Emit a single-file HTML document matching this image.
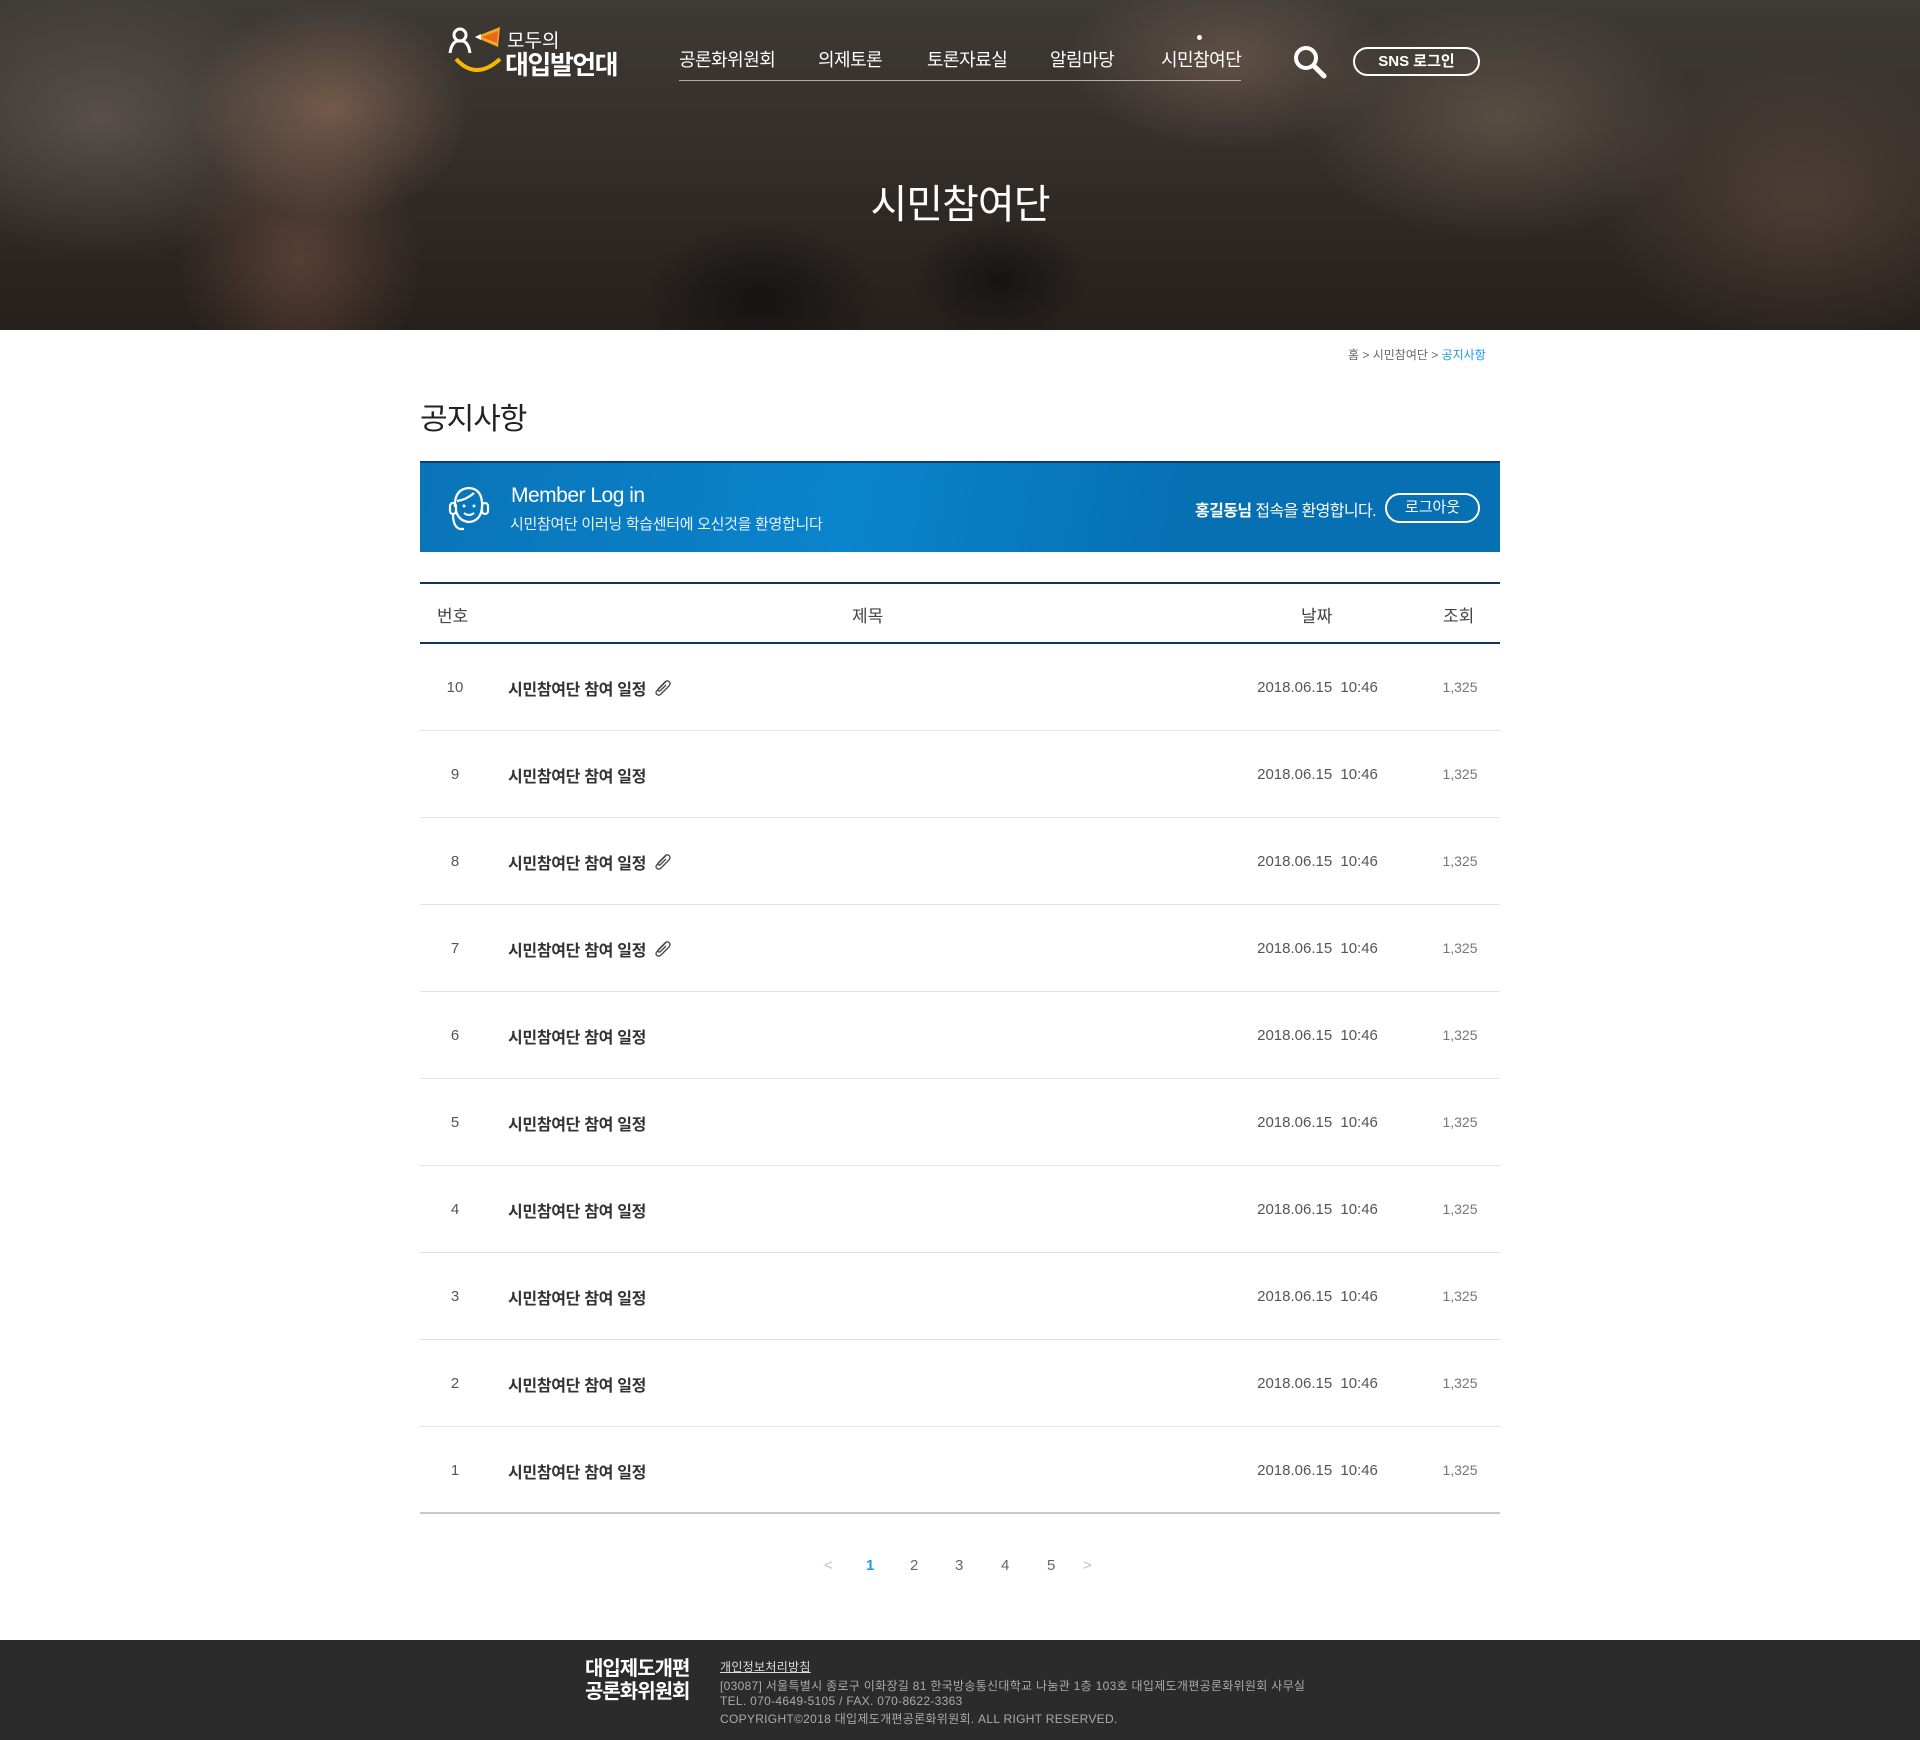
<!DOCTYPE html>
<html><head><meta charset="utf-8">
<style>
*{margin:0;padding:0;box-sizing:border-box}
body{width:1920px;height:1740px;position:relative;background:#fff;font-family:"Liberation Sans","Noto Sans CJK KR",sans-serif;color:#333;overflow:hidden}
.hero{position:absolute;left:0;top:0;width:1920px;height:330px;overflow:hidden;
background:
radial-gradient(ellipse 140px 110px at 330px 110px,rgba(190,140,110,.45),transparent),
radial-gradient(ellipse 120px 140px at 300px 260px,rgba(150,100,80,.4),transparent),
radial-gradient(ellipse 90px 60px at 1000px 280px,rgba(20,18,18,.9),transparent),
radial-gradient(ellipse 120px 80px at 760px 300px,rgba(20,18,18,.9),transparent),
radial-gradient(ellipse 200px 120px at 1500px 120px,rgba(140,120,100,.4),transparent),
radial-gradient(ellipse 220px 140px at 100px 120px,rgba(120,110,100,.5),transparent),
radial-gradient(ellipse 200px 150px at 1800px 200px,rgba(110,85,70,.45),transparent),
radial-gradient(ellipse 160px 90px at 1230px 60px,rgba(150,120,100,.4),transparent),
linear-gradient(180deg,#3e3a36 0%,#332d29 50%,#26201c 100%);}
.abs{position:absolute}
.nav a{position:absolute;top:46px;color:#fff;font-size:18px;text-decoration:none;white-space:nowrap;letter-spacing:-0.5px}
.row{position:absolute;left:420px;width:1080px;height:87px;border-bottom:1px solid #e4e4e4}
.row span{position:absolute;top:35px;font-size:15px;color:#555}
.row .n{width:70px;left:0;text-align:center}
.row .t{left:88px;top:32px;font-size:16px;font-weight:bold;color:#333;letter-spacing:-0.3px}
.row .d{left:830px;width:135px;text-align:center;word-spacing:4px}
.row .v{left:995px;width:90px;text-align:center;color:#777;font-size:14px}
.pg{position:absolute;top:1557px;font-size:15px;color:#666}
.ft{position:absolute;left:720px;font-size:12px;color:#aaa;white-space:nowrap;letter-spacing:0.3px}
</style></head><body>
<div class="hero">
  <svg class="abs" style="left:448px;top:26px" width="56" height="50" viewBox="0 0 56 50">
    <circle cx="12" cy="9" r="6" fill="none" stroke="#fff" stroke-width="3"/>
    <path d="M2 27 Q4 14 12 15 Q20 14 22 27" fill="none" stroke="#fff" stroke-width="3"/>
    <path d="M27 11 L52 1 L50 21 Z" fill="#f5a623"/>
    <path d="M34 11 L50 5 L49 17 Z" fill="#e8681a"/>
    <path d="M27 11 L33 8 L33 14 Z" fill="#fff"/>
    <path d="M8 33 Q28 55 52 33" fill="none" stroke="#f5b700" stroke-width="4"/>
  </svg>
  <div class="abs" style="left:507px;top:26px;color:#fff;font-size:19px">모두의</div>
  <div class="abs" style="left:505px;top:45px;color:#fff;font-size:26px;font-weight:bold;letter-spacing:-1.5px">대입발언대</div>
  <div class="nav">
    <a style="left:679px">공론화위원회</a>
    <a style="left:818px">의제토론</a>
    <a style="left:927px">토론자료실</a>
    <a style="left:1050px">알림마당</a>
    <a style="left:1161px">시민참여단</a>
  </div>
  <div class="abs" style="left:1197px;top:35px;width:5px;height:5px;border-radius:50%;background:#fff"></div>
  <div class="abs" style="left:679px;top:80px;width:562px;height:1px;background:rgba(255,255,255,.6)"></div>
  <svg class="abs" style="left:1293px;top:45px" width="36" height="34" viewBox="0 0 36 34">
    <circle cx="13" cy="13" r="10" fill="none" stroke="#fff" stroke-width="4"/>
    <path d="M21 21 L31 31" stroke="#fff" stroke-width="5" stroke-linecap="round"/>
  </svg>
  <div class="abs" style="left:1353px;top:47px;width:127px;height:29px;border:2px solid #fff;border-radius:15px;color:#fff;font-size:15px;font-weight:bold;text-align:center;line-height:25px">SNS 로그인</div>
  <div class="abs" style="left:0;width:1920px;top:172px;text-align:center;color:#fff;font-size:40px;letter-spacing:-1px">시민참여단</div>
</div>

<div class="abs" style="left:1348px;top:346px;font-size:12px;color:#666">홈 &gt; 시민참여단 &gt; <span style="color:#1a9be8">공지사항</span></div>
<div class="abs" style="left:420px;top:394px;font-size:30px;color:#222;letter-spacing:-1px">공지사항</div>

<div class="abs" style="left:420px;top:461px;width:1080px;height:91px;background:linear-gradient(100deg,#0a74b8 0%,#0a84cc 40%,#0670b3 70%,#0770b2 100%);border-top:2px solid #0b3e6e">
  <svg class="abs" style="left:26px;top:20px" width="46" height="50" viewBox="0 0 46 50">
    <g fill="none" stroke="#fff" stroke-width="2.2">
    <path d="M9 24 Q8 6 23 5 Q37 6 36 24 Q35 38 23 39 Q12 38 10 27"/>
    <path d="M11 18 Q20 17 28 10"/>
    <rect x="4" y="20" width="6" height="11" rx="3"/>
    <rect x="36" y="20" width="6" height="11" rx="3"/>
    <path d="M7 31 Q7 44 14 46 L18 46"/>
    </g>
    <circle cx="18" cy="23" r="1.5" fill="#fff"/><circle cx="28" cy="23" r="1.5" fill="#fff"/>
    <path d="M18 30 Q23 34 28 30" fill="none" stroke="#fff" stroke-width="2"/>
  </svg>
  <div class="abs" style="left:91px;top:21px;color:#fff;font-size:21px;letter-spacing:-0.5px">Member Log in</div>
  <div class="abs" style="left:90px;top:50px;color:#e8f3ff;font-size:15px;letter-spacing:-0.3px">시민참여단 이러닝 학습센터에 오신것을 환영합니다</div>
  <div class="abs" style="left:775px;top:34px;color:#fff;font-size:16px;letter-spacing:-0.6px"><b>홍길동님</b> 접속을 환영합니다.</div>
  <div class="abs" style="left:965px;top:30px;width:95px;height:30px;border:2px solid #fff;border-radius:15px;color:#fff;font-size:15px;text-align:center;line-height:26px">로그아웃</div>
</div>

<div class="abs" style="left:420px;top:582px;width:1080px;height:62px;border-top:2px solid #0c3560;border-bottom:2px solid #0c3560;font-size:17px;color:#444">
  <span class="abs" style="left:17px;top:18px">번호</span>
  <span class="abs" style="left:432px;top:18px">제목</span>
  <span class="abs" style="left:881px;top:18px">날짜</span>
  <span class="abs" style="left:1023px;top:18px">조회</span>
</div>

<div class="row" style="top:644px"><span class="n">10</span><span class="t">시민참여단 참여 일정 <svg width="20" height="20" viewBox="0 0 20 20" style="vertical-align:-3px;margin-left:2px"><path d="M14 3.5 L5 12.5 Q3 15 5 16.5 Q7 18 9 16 L17 8 Q19 5 17 3.5 Q15 2 13 4 L6.5 10.5 Q5.5 12 6.5 12.8 Q7.5 13.5 8.5 12.5 L14 7" fill="none" stroke="#444" stroke-width="1.3"/></svg></span><span class="d">2018.06.15 10:46</span><span class="v">1,325</span></div>
<div class="row" style="top:731px"><span class="n">9</span><span class="t">시민참여단 참여 일정</span><span class="d">2018.06.15 10:46</span><span class="v">1,325</span></div>
<div class="row" style="top:818px"><span class="n">8</span><span class="t">시민참여단 참여 일정 <svg width="20" height="20" viewBox="0 0 20 20" style="vertical-align:-3px;margin-left:2px"><path d="M14 3.5 L5 12.5 Q3 15 5 16.5 Q7 18 9 16 L17 8 Q19 5 17 3.5 Q15 2 13 4 L6.5 10.5 Q5.5 12 6.5 12.8 Q7.5 13.5 8.5 12.5 L14 7" fill="none" stroke="#444" stroke-width="1.3"/></svg></span><span class="d">2018.06.15 10:46</span><span class="v">1,325</span></div>
<div class="row" style="top:905px"><span class="n">7</span><span class="t">시민참여단 참여 일정 <svg width="20" height="20" viewBox="0 0 20 20" style="vertical-align:-3px;margin-left:2px"><path d="M14 3.5 L5 12.5 Q3 15 5 16.5 Q7 18 9 16 L17 8 Q19 5 17 3.5 Q15 2 13 4 L6.5 10.5 Q5.5 12 6.5 12.8 Q7.5 13.5 8.5 12.5 L14 7" fill="none" stroke="#444" stroke-width="1.3"/></svg></span><span class="d">2018.06.15 10:46</span><span class="v">1,325</span></div>
<div class="row" style="top:992px"><span class="n">6</span><span class="t">시민참여단 참여 일정</span><span class="d">2018.06.15 10:46</span><span class="v">1,325</span></div>
<div class="row" style="top:1079px"><span class="n">5</span><span class="t">시민참여단 참여 일정</span><span class="d">2018.06.15 10:46</span><span class="v">1,325</span></div>
<div class="row" style="top:1166px"><span class="n">4</span><span class="t">시민참여단 참여 일정</span><span class="d">2018.06.15 10:46</span><span class="v">1,325</span></div>
<div class="row" style="top:1253px"><span class="n">3</span><span class="t">시민참여단 참여 일정</span><span class="d">2018.06.15 10:46</span><span class="v">1,325</span></div>
<div class="row" style="top:1340px"><span class="n">2</span><span class="t">시민참여단 참여 일정</span><span class="d">2018.06.15 10:46</span><span class="v">1,325</span></div>
<div class="row" style="top:1427px;border-bottom:2px solid #c8c8c8"><span class="n">1</span><span class="t">시민참여단 참여 일정</span><span class="d">2018.06.15 10:46</span><span class="v">1,325</span></div>

<div class="pg" style="left:824px;color:#b8c2cc">&lt;</div>
<div class="pg" style="left:866px;color:#1a9be8;font-weight:bold">1</div>
<div class="pg" style="left:910px">2</div>
<div class="pg" style="left:955px">3</div>
<div class="pg" style="left:1001px">4</div>
<div class="pg" style="left:1047px">5</div>
<div class="pg" style="left:1083px;color:#b8c2cc">&gt;</div>

<div class="abs" style="left:0;top:1640px;width:1920px;height:100px;background:#2b2b2b">
  <div class="abs" style="left:585px;top:18px;color:#fff;font-size:20px;font-weight:bold;line-height:23px;letter-spacing:-1px">대입제도개편<br>공론화위원회</div>
  <div class="ft" style="top:18px;color:#ddd;text-decoration:underline">개인정보처리방침</div>
  <div class="ft" style="top:37px">[03087] 서울특별시 종로구 이화장길 81 한국방송통신대학교 나눔관 1층 103호 대입제도개편공론화위원회 사무실</div>
  <div class="ft" style="top:54px">TEL. 070-4649-5105 / FAX. 070-8622-3363</div>
  <div class="ft" style="top:70px">COPYRIGHT©2018 대입제도개편공론화위원회. ALL RIGHT RESERVED.</div>
</div>
</body></html>
